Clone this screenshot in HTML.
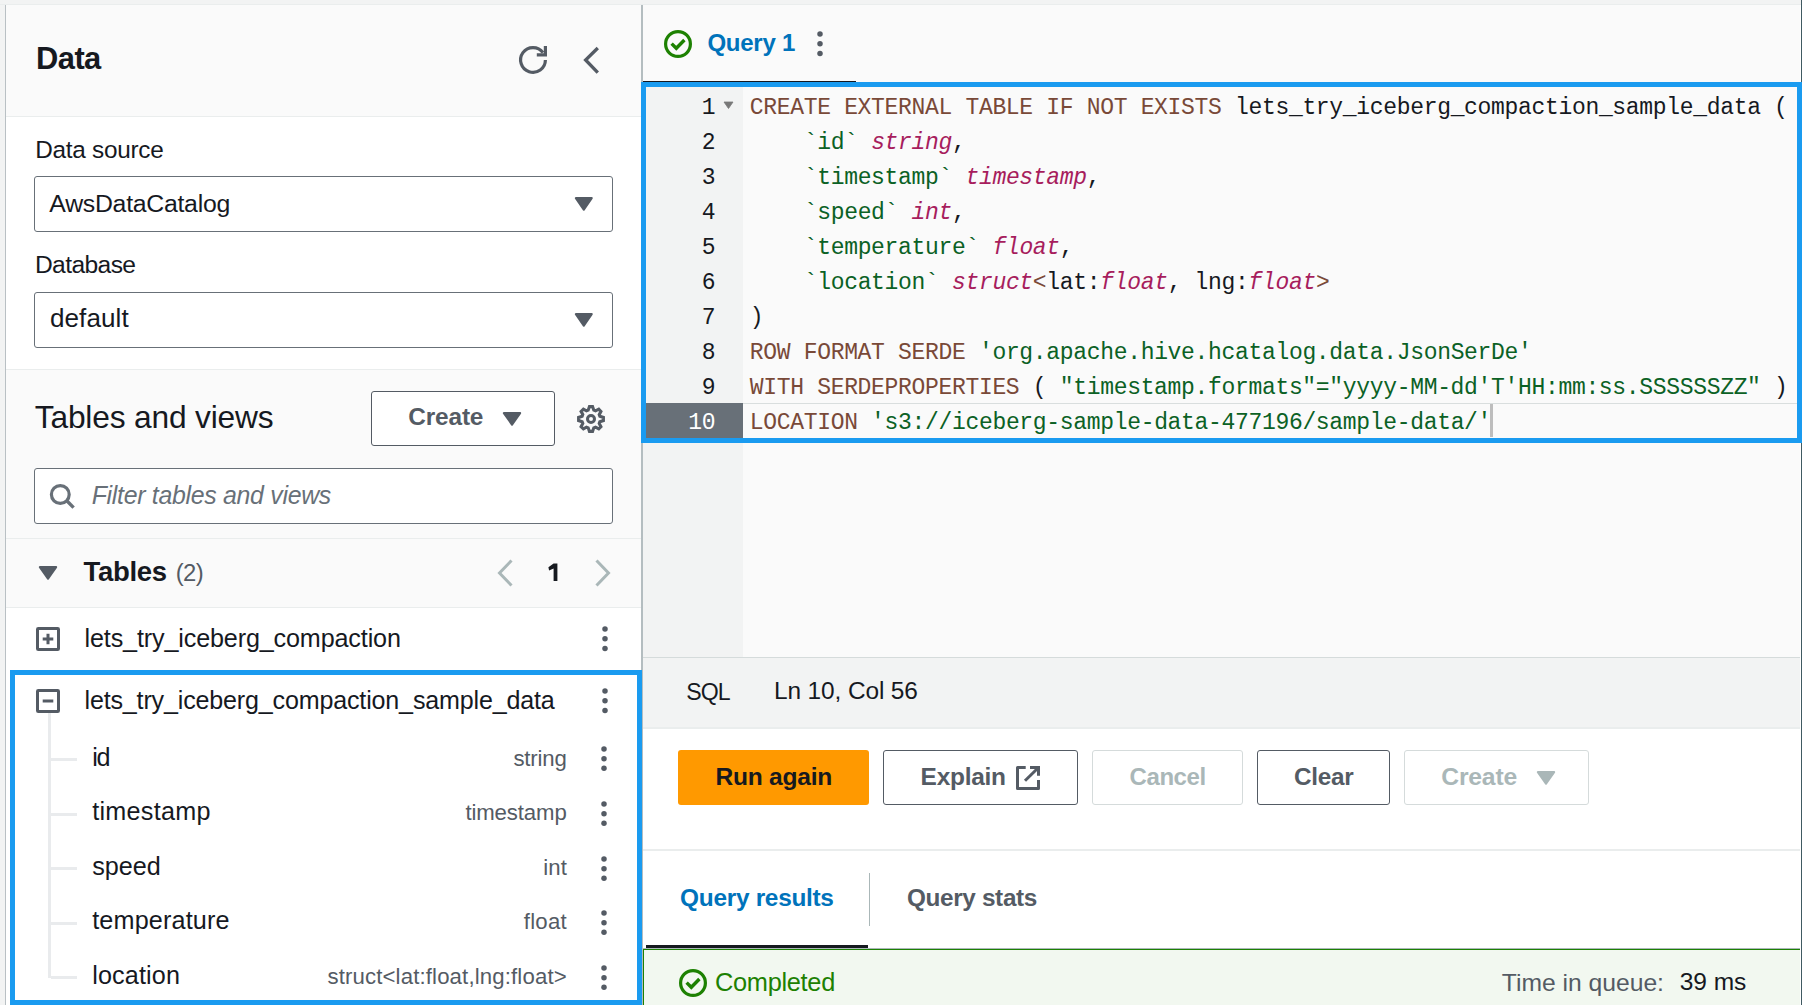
<!DOCTYPE html>
<html><head><meta charset="utf-8"><title>Athena Query Editor</title>
<style>
html,body{margin:0;padding:0;}
body{width:1802px;height:1005px;overflow:hidden;position:relative;background:#f2f3f3;
font-family:"Liberation Sans",sans-serif;}
.a{position:absolute;display:block;}
.t{position:absolute;white-space:pre;}
</style></head><body>
<div class="a" style="left:0px;top:0px;width:1802px;height:1005px;background:#f2f3f3;"></div>
<div class="a" style="left:0px;top:4px;width:1802px;height:1px;background:#eaeded;"></div>
<div class="a" style="left:5px;top:5px;width:637px;height:1000px;background:#ffffff;"></div>
<div class="a" style="left:6px;top:5px;width:635px;height:111px;background:#fafafa;"></div>
<div class="a" style="left:6px;top:116px;width:635px;height:1px;background:#eaeded;"></div>
<div class="a" style="left:6px;top:369px;width:635px;height:1px;background:#eaeded;"></div>
<div class="a" style="left:6px;top:370px;width:635px;height:168px;background:#fafafa;"></div>
<div class="a" style="left:6px;top:538px;width:635px;height:1px;background:#eaeded;"></div>
<div class="a" style="left:6px;top:539px;width:635px;height:68px;background:#fafafa;"></div>
<div class="a" style="left:6px;top:607px;width:635px;height:1px;background:#eaeded;"></div>
<div class="a" style="left:5px;top:5px;width:1px;height:1000px;background:#b9c0c4;"></div>
<div class="t" style="left:36.00px;top:36.80px;font-family:'Liberation Sans',sans-serif;font-size:30.88px;line-height:43px;font-weight:700;color:#16191f;letter-spacing:-0.543px;">Data</div>
<svg class="a" style="left:517px;top:44px;" width="32" height="32" viewBox="0 0 32 32"><path d="M28.4 16 A12.4 12.4 0 1 1 26.0 8.6" fill="none" stroke="#545b64" stroke-width="3.2"/><path d="M19.8 10.8 H28.4 V2" fill="none" stroke="#545b64" stroke-width="3.2"/></svg>
<svg class="a" style="left:580px;top:44px;" width="24" height="32" viewBox="0 0 24 32"><path d="M17.8 4 L5.6 16 L17.8 28.6" fill="none" stroke="#545b64" stroke-width="3.3"/></svg>
<div class="t" style="left:35.30px;top:132.56px;font-family:'Liberation Sans',sans-serif;font-size:24.34px;line-height:34px;font-weight:400;color:#16191f;letter-spacing:-0.275px;">Data source</div>
<div class="a" style="left:34px;top:176px;width:579px;height:56px;background:#fff;border:1px solid #687078;box-sizing:border-box;border-radius:3px;"></div>
<div class="t" style="left:49.30px;top:186.19px;font-family:'Liberation Sans',sans-serif;font-size:24.84px;line-height:35px;font-weight:400;color:#16191f;letter-spacing:-0.273px;">AwsDataCatalog</div>
<svg class="a" style="left:574.4px;top:195.8px;" width="19.600000000000023" height="16.19999999999999" viewBox="0 0 19.600000000000023 16.19999999999999"><path d="M1.9 2.1 L17.7 2.1 L9.8 13.7 Z" fill="#545b64" stroke="#545b64" stroke-width="2.2" stroke-linejoin="round"/></svg>
<div class="t" style="left:34.90px;top:247.56px;font-family:'Liberation Sans',sans-serif;font-size:24.62px;line-height:34px;font-weight:400;color:#16191f;letter-spacing:-0.602px;">Database</div>
<div class="a" style="left:34px;top:292px;width:579px;height:56px;background:#fff;border:1px solid #687078;box-sizing:border-box;border-radius:3px;"></div>
<div class="t" style="left:49.90px;top:299.86px;font-family:'Liberation Sans',sans-serif;font-size:26.07px;line-height:36px;font-weight:400;color:#16191f;letter-spacing:0.091px;">default</div>
<svg class="a" style="left:574.4px;top:311.8px;" width="19.600000000000023" height="16.19999999999999" viewBox="0 0 19.600000000000023 16.19999999999999"><path d="M1.9 2.1 L17.7 2.1 L9.8 13.7 Z" fill="#545b64" stroke="#545b64" stroke-width="2.2" stroke-linejoin="round"/></svg>
<div class="t" style="left:34.80px;top:394.90px;font-family:'Liberation Sans',sans-serif;font-size:31.73px;line-height:44px;font-weight:400;color:#16191f;letter-spacing:-0.187px;">Tables and views</div>
<div class="a" style="left:371px;top:391px;width:184px;height:55px;background:#fff;border:1px solid #545b64;box-sizing:border-box;border-radius:3px;"></div>
<div class="t" style="left:408.20px;top:400.33px;font-family:'Liberation Sans',sans-serif;font-size:24.42px;line-height:34px;font-weight:700;color:#545b64;letter-spacing:-0.145px;">Create</div>
<svg class="a" style="left:502px;top:411px;" width="20" height="16" viewBox="0 0 20 16"><path d="M1.9 2.1 L18.1 2.1 L10.0 13.5 Z" fill="#545b64" stroke="#545b64" stroke-width="2.2" stroke-linejoin="round"/></svg>
<svg class="a" style="left:575px;top:403px;" width="32" height="32" viewBox="0 0 32 32"><path d="M14.45 3.60 L17.55 3.60 L18.79 7.16 L20.50 7.79 L23.75 6.08 L25.92 8.40 L24.22 11.66 L24.84 13.21 L28.40 14.45 L28.40 17.55 L24.84 18.79 L24.22 20.50 L25.92 23.75 L23.75 25.92 L20.50 24.22 L18.79 24.84 L17.55 28.40 L14.45 28.40 L13.21 24.84 L11.50 24.22 L8.40 25.92 L6.08 23.75 L7.79 20.50 L7.16 18.79 L3.60 17.55 L3.60 14.45 L7.16 13.21 L7.79 11.50 L6.08 8.40 L8.40 6.08 L11.50 7.79 L13.21 7.16 Z" fill="none" stroke="#545b64" stroke-width="3.1" stroke-linejoin="miter"/><circle cx="16" cy="16" r="3.5" fill="none" stroke="#545b64" stroke-width="3"/></svg>
<div class="a" style="left:34px;top:468px;width:579px;height:56px;background:#fff;border:1px solid #687078;box-sizing:border-box;border-radius:3px;"></div>
<svg class="a" style="left:46px;top:480px;" width="32" height="32" viewBox="0 0 32 32"><circle cx="14.3" cy="14.5" r="8.9" fill="none" stroke="#687078" stroke-width="3.2"/><path d="M20.8 20.8 L27.6 27.6" stroke="#687078" stroke-width="3.4"/></svg>
<div class="t" style="left:91.70px;top:477.89px;font-family:'Liberation Sans',sans-serif;font-size:24.85px;line-height:35px;font-weight:400;color:#687078;font-style:italic;letter-spacing:-0.283px;">Filter tables and views</div>
<svg class="a" style="left:38px;top:565px;" width="20" height="16" viewBox="0 0 20 16"><path d="M1.9 2.1 L18.1 2.1 L10.0 13.5 Z" fill="#545b64" stroke="#545b64" stroke-width="2.2" stroke-linejoin="round"/></svg>
<div class="t" style="left:83.50px;top:551.65px;font-family:'Liberation Sans',sans-serif;font-size:27.53px;line-height:39px;font-weight:700;color:#16191f;letter-spacing:-0.318px;">Tables</div>
<div class="t" style="left:175.70px;top:555.93px;font-family:'Liberation Sans',sans-serif;font-size:23.85px;line-height:33px;font-weight:400;color:#545b64;letter-spacing:-0.522px;">(2)</div>
<svg class="a" style="left:492px;top:556px;" width="26" height="34" viewBox="0 0 26 34"><path d="M19.5 4.5 L7.5 17 L19.5 29.5" fill="none" stroke="#aab7b8" stroke-width="3"/></svg>
<svg class="a" style="left:545px;top:560px;" width="16" height="24" viewBox="0 0 16 24"><path d="M8.6 3.5 H12.4 V21 H8.6 V8.6 L4.1 10.4 L3.4 7.2 Z" fill="#16191f"/></svg>
<svg class="a" style="left:590px;top:556px;" width="26" height="34" viewBox="0 0 26 34"><path d="M6.5 4.5 L18.5 17 L6.5 29.5" fill="none" stroke="#aab7b8" stroke-width="3"/></svg>
<svg class="a" style="left:34px;top:625px;" width="28" height="28" viewBox="0 0 28 28"><rect x="3.5" y="3.5" width="21" height="21" fill="none" stroke="#545b64" stroke-width="3" rx="0.8"/><path d="M8.7 14 H19.3 M14 8.8 V19.2" stroke="#545b64" stroke-width="3"/></svg>
<div class="t" style="left:84.50px;top:620.77px;font-family:'Liberation Sans',sans-serif;font-size:25.17px;line-height:35px;font-weight:400;color:#16191f;letter-spacing:-0.146px;">lets_try_iceberg_compaction</div>
<svg class="a" style="left:600px;top:624.4px;" width="10" height="29.399999999999977" viewBox="0 0 10 29.399999999999977"><circle cx="5.00" cy="5.00" r="2.75" fill="#545b64"/><circle cx="5.00" cy="14.70" r="2.75" fill="#545b64"/><circle cx="5.00" cy="24.40" r="2.75" fill="#545b64"/></svg>
<svg class="a" style="left:34px;top:687px;" width="28" height="28" viewBox="0 0 28 28"><rect x="3.5" y="3.5" width="21" height="21" fill="none" stroke="#545b64" stroke-width="3" rx="0.8"/><path d="M8.7 14 H19.3" stroke="#545b64" stroke-width="3"/></svg>
<div class="t" style="left:84.50px;top:682.80px;font-family:'Liberation Sans',sans-serif;font-size:25.09px;line-height:35px;font-weight:400;color:#16191f;letter-spacing:-0.171px;">lets_try_iceberg_compaction_sample_data</div>
<svg class="a" style="left:600px;top:686.2px;" width="10" height="29.5" viewBox="0 0 10 29.5"><circle cx="5.00" cy="5.00" r="2.75" fill="#545b64"/><circle cx="5.00" cy="14.80" r="2.75" fill="#545b64"/><circle cx="5.00" cy="24.50" r="2.75" fill="#545b64"/></svg>
<div class="a" style="left:48px;top:713px;width:3px;height:265px;background:#e9ebed;"></div>
<div class="a" style="left:51px;top:758px;width:26px;height:3px;background:#e9ebed;"></div>
<div class="t" style="left:92.20px;top:739.76px;font-family:'Liberation Sans',sans-serif;font-size:25.20px;line-height:35px;font-weight:400;color:#16191f;letter-spacing:-1.306px;">id</div>
<div class="t" style="left:513.40px;top:742.80px;font-family:'Liberation Sans',sans-serif;font-size:22.20px;line-height:31px;font-weight:400;color:#545b64;letter-spacing:-0.176px;">string</div>
<svg class="a" style="left:599px;top:744.4px;" width="10" height="29.300000000000068" viewBox="0 0 10 29.300000000000068"><circle cx="5.00" cy="5.00" r="2.75" fill="#545b64"/><circle cx="5.00" cy="14.70" r="2.75" fill="#545b64"/><circle cx="5.00" cy="24.30" r="2.75" fill="#545b64"/></svg>
<div class="a" style="left:51px;top:813px;width:26px;height:3px;background:#e9ebed;"></div>
<div class="t" style="left:92.20px;top:794.21px;font-family:'Liberation Sans',sans-serif;font-size:25.20px;line-height:35px;font-weight:400;color:#16191f;letter-spacing:0.272px;">timestamp</div>
<div class="t" style="left:465.40px;top:797.25px;font-family:'Liberation Sans',sans-serif;font-size:22.20px;line-height:31px;font-weight:400;color:#545b64;letter-spacing:-0.123px;">timestamp</div>
<svg class="a" style="left:599px;top:799.0px;" width="10" height="29.300000000000068" viewBox="0 0 10 29.300000000000068"><circle cx="5.00" cy="5.00" r="2.75" fill="#545b64"/><circle cx="5.00" cy="14.70" r="2.75" fill="#545b64"/><circle cx="5.00" cy="24.30" r="2.75" fill="#545b64"/></svg>
<div class="a" style="left:51px;top:867px;width:26px;height:3px;background:#e9ebed;"></div>
<div class="t" style="left:92.20px;top:848.66px;font-family:'Liberation Sans',sans-serif;font-size:25.20px;line-height:35px;font-weight:400;color:#16191f;">speed</div>
<div class="t" style="left:543.36px;top:851.70px;font-family:'Liberation Sans',sans-serif;font-size:22.20px;line-height:31px;font-weight:400;color:#545b64;">int</div>
<svg class="a" style="left:599px;top:853.6px;" width="10" height="29.300000000000068" viewBox="0 0 10 29.300000000000068"><circle cx="5.00" cy="5.00" r="2.75" fill="#545b64"/><circle cx="5.00" cy="14.70" r="2.75" fill="#545b64"/><circle cx="5.00" cy="24.30" r="2.75" fill="#545b64"/></svg>
<div class="a" style="left:51px;top:922px;width:26px;height:3px;background:#e9ebed;"></div>
<div class="t" style="left:92.20px;top:903.11px;font-family:'Liberation Sans',sans-serif;font-size:25.20px;line-height:35px;font-weight:400;color:#16191f;letter-spacing:0.152px;">temperature</div>
<div class="t" style="left:523.70px;top:906.15px;font-family:'Liberation Sans',sans-serif;font-size:22.20px;line-height:31px;font-weight:400;color:#545b64;letter-spacing:0.286px;">float</div>
<svg class="a" style="left:599px;top:908.2px;" width="10" height="29.300000000000068" viewBox="0 0 10 29.300000000000068"><circle cx="5.00" cy="5.00" r="2.75" fill="#545b64"/><circle cx="5.00" cy="14.70" r="2.75" fill="#545b64"/><circle cx="5.00" cy="24.30" r="2.75" fill="#545b64"/></svg>
<div class="a" style="left:51px;top:976px;width:26px;height:3px;background:#e9ebed;"></div>
<div class="t" style="left:92.20px;top:957.56px;font-family:'Liberation Sans',sans-serif;font-size:25.20px;line-height:35px;font-weight:400;color:#16191f;letter-spacing:0.134px;">location</div>
<div class="t" style="left:327.40px;top:960.60px;font-family:'Liberation Sans',sans-serif;font-size:22.20px;line-height:31px;font-weight:400;color:#545b64;letter-spacing:0.142px;">struct&lt;lat:float,lng:float&gt;</div>
<svg class="a" style="left:599px;top:962.8px;" width="10" height="29.300000000000068" viewBox="0 0 10 29.300000000000068"><circle cx="5.00" cy="5.00" r="2.75" fill="#545b64"/><circle cx="5.00" cy="14.70" r="2.75" fill="#545b64"/><circle cx="5.00" cy="24.30" r="2.75" fill="#545b64"/></svg>
<div class="a" style="left:642px;top:5px;width:1158px;height:1000px;background:#fafafa;"></div>
<div class="a" style="left:1800px;top:5px;width:1px;height:1000px;background:#ffffff;"></div>
<div class="a" style="left:1801px;top:0px;width:1px;height:1005px;background:#405a62;"></div>
<svg class="a" style="left:662px;top:28px;" width="32" height="32" viewBox="0 0 32 32"><circle cx="16" cy="16" r="12.4" fill="none" stroke="#1d8102" stroke-width="3.2"/><path d="M9.6 15.6 L14.3 20.3 L22.4 12" fill="none" stroke="#1d8102" stroke-width="3.4"/></svg>
<div class="t" style="left:707.40px;top:26.27px;font-family:'Liberation Sans',sans-serif;font-size:24.04px;line-height:34px;font-weight:700;color:#0073bb;letter-spacing:-0.272px;">Query 1</div>
<svg class="a" style="left:815px;top:29.200000000000003px;" width="10" height="29.5" viewBox="0 0 10 29.5"><circle cx="5.00" cy="5.00" r="2.75" fill="#545b64"/><circle cx="5.00" cy="14.70" r="2.75" fill="#545b64"/><circle cx="5.00" cy="24.50" r="2.75" fill="#545b64"/></svg>
<div class="a" style="left:642px;top:81px;width:214px;height:1px;background:#16191f;"></div>
<div class="a" style="left:642px;top:82px;width:101px;height:575px;background:#f2f3f3;"></div>
<div class="a" style="left:743px;top:82px;width:1057px;height:575px;background:#fafafa;"></div>
<div class="a" style="left:642px;top:403px;width:101px;height:35px;background:#687078;"></div>
<div class="a" style="left:743px;top:403px;width:1057px;height:1px;background:#d9dede;"></div>
<div class="t" style="left:701.70px;top:91.58px;font-family:'Liberation Mono',monospace;font-size:23.00px;line-height:32px;font-weight:400;color:#16191f;letter-spacing:-0.325px;">1</div>
<div class="t" style="left:749.8px;top:90.88px;font-family:'Liberation Mono',monospace;font-size:23.0px;line-height:35px;letter-spacing:-0.325px;white-space:pre;"><span style="color:#794938;">CREATE EXTERNAL TABLE IF NOT EXISTS</span><span style="color:#16191f;"> lets_try_iceberg_compaction_sample_data (</span></div>
<div class="t" style="left:701.70px;top:126.58px;font-family:'Liberation Mono',monospace;font-size:23.00px;line-height:32px;font-weight:400;color:#16191f;letter-spacing:-0.325px;">2</div>
<div class="t" style="left:749.8px;top:125.88px;font-family:'Liberation Mono',monospace;font-size:23.0px;line-height:35px;letter-spacing:-0.325px;white-space:pre;"><span style="color:#16191f;">    </span><span style="color:#0b6125;">`id`</span><span style="color:#16191f;"> </span><span style="color:#a71d5d;font-style:italic;">string</span><span style="color:#16191f;">,</span></div>
<div class="t" style="left:701.70px;top:161.58px;font-family:'Liberation Mono',monospace;font-size:23.00px;line-height:32px;font-weight:400;color:#16191f;letter-spacing:-0.325px;">3</div>
<div class="t" style="left:749.8px;top:160.88px;font-family:'Liberation Mono',monospace;font-size:23.0px;line-height:35px;letter-spacing:-0.325px;white-space:pre;"><span style="color:#16191f;">    </span><span style="color:#0b6125;">`timestamp`</span><span style="color:#16191f;"> </span><span style="color:#a71d5d;font-style:italic;">timestamp</span><span style="color:#16191f;">,</span></div>
<div class="t" style="left:701.70px;top:196.58px;font-family:'Liberation Mono',monospace;font-size:23.00px;line-height:32px;font-weight:400;color:#16191f;letter-spacing:-0.325px;">4</div>
<div class="t" style="left:749.8px;top:195.88px;font-family:'Liberation Mono',monospace;font-size:23.0px;line-height:35px;letter-spacing:-0.325px;white-space:pre;"><span style="color:#16191f;">    </span><span style="color:#0b6125;">`speed`</span><span style="color:#16191f;"> </span><span style="color:#a71d5d;font-style:italic;">int</span><span style="color:#16191f;">,</span></div>
<div class="t" style="left:701.70px;top:231.58px;font-family:'Liberation Mono',monospace;font-size:23.00px;line-height:32px;font-weight:400;color:#16191f;letter-spacing:-0.325px;">5</div>
<div class="t" style="left:749.8px;top:230.88px;font-family:'Liberation Mono',monospace;font-size:23.0px;line-height:35px;letter-spacing:-0.325px;white-space:pre;"><span style="color:#16191f;">    </span><span style="color:#0b6125;">`temperature`</span><span style="color:#16191f;"> </span><span style="color:#a71d5d;font-style:italic;">float</span><span style="color:#16191f;">,</span></div>
<div class="t" style="left:701.70px;top:266.58px;font-family:'Liberation Mono',monospace;font-size:23.00px;line-height:32px;font-weight:400;color:#16191f;letter-spacing:-0.325px;">6</div>
<div class="t" style="left:749.8px;top:265.88px;font-family:'Liberation Mono',monospace;font-size:23.0px;line-height:35px;letter-spacing:-0.325px;white-space:pre;"><span style="color:#16191f;">    </span><span style="color:#0b6125;">`location`</span><span style="color:#16191f;"> </span><span style="color:#a71d5d;font-style:italic;">struct</span><span style="color:#794938;">&lt;</span><span style="color:#16191f;">lat:</span><span style="color:#a71d5d;font-style:italic;">float</span><span style="color:#16191f;">, lng:</span><span style="color:#a71d5d;font-style:italic;">float</span><span style="color:#794938;">&gt;</span></div>
<div class="t" style="left:701.70px;top:301.58px;font-family:'Liberation Mono',monospace;font-size:23.00px;line-height:32px;font-weight:400;color:#16191f;letter-spacing:-0.325px;">7</div>
<div class="t" style="left:749.8px;top:300.88px;font-family:'Liberation Mono',monospace;font-size:23.0px;line-height:35px;letter-spacing:-0.325px;white-space:pre;"><span style="color:#16191f;">)</span></div>
<div class="t" style="left:701.70px;top:336.58px;font-family:'Liberation Mono',monospace;font-size:23.00px;line-height:32px;font-weight:400;color:#16191f;letter-spacing:-0.325px;">8</div>
<div class="t" style="left:749.8px;top:335.88px;font-family:'Liberation Mono',monospace;font-size:23.0px;line-height:35px;letter-spacing:-0.325px;white-space:pre;"><span style="color:#794938;">ROW FORMAT SERDE</span><span style="color:#16191f;"> </span><span style="color:#0b6125;">&#x27;org.apache.hive.hcatalog.data.JsonSerDe&#x27;</span></div>
<div class="t" style="left:701.70px;top:371.58px;font-family:'Liberation Mono',monospace;font-size:23.00px;line-height:32px;font-weight:400;color:#16191f;letter-spacing:-0.325px;">9</div>
<div class="t" style="left:749.8px;top:370.88px;font-family:'Liberation Mono',monospace;font-size:23.0px;line-height:35px;letter-spacing:-0.325px;white-space:pre;"><span style="color:#794938;">WITH SERDEPROPERTIES</span><span style="color:#16191f;"> ( </span><span style="color:#0b6125;">&quot;timestamp.formats&quot;=&quot;yyyy-MM-dd&#x27;T&#x27;HH:mm:ss.SSSSSSZZ&quot;</span><span style="color:#16191f;"> )</span></div>
<div class="t" style="left:688.23px;top:406.58px;font-family:'Liberation Mono',monospace;font-size:23.00px;line-height:32px;font-weight:400;color:#ffffff;letter-spacing:-0.325px;">10</div>
<div class="t" style="left:749.8px;top:405.88px;font-family:'Liberation Mono',monospace;font-size:23.0px;line-height:35px;letter-spacing:-0.325px;white-space:pre;"><span style="color:#794938;">LOCATION</span><span style="color:#16191f;"> </span><span style="color:#0b6125;">&#x27;s3://iceberg-sample-data-477196/sample-data/&#x27;</span></div>
<svg class="a" style="left:722px;top:100px;" width="13" height="10" viewBox="0 0 13 10"><path d="M2 2 L11 2 L6.5 8.5 Z" fill="#787878" stroke="#787878" stroke-width="0.8" stroke-linejoin="round"/></svg>
<div class="a" style="left:1490px;top:404px;width:3px;height:33px;background:#bdbdbd;"></div>
<div class="a" style="left:642px;top:657px;width:1158px;height:1px;background:#d5dbdb;"></div>
<div class="a" style="left:642px;top:658px;width:1158px;height:69px;background:#f2f3f3;"></div>
<div class="a" style="left:642px;top:727px;width:1158px;height:2px;background:#eaeded;"></div>
<div class="t" style="left:686.30px;top:675.58px;font-family:'Liberation Sans',sans-serif;font-size:23.12px;line-height:32px;font-weight:400;color:#16191f;letter-spacing:-0.934px;">SQL</div>
<div class="t" style="left:774.00px;top:674.13px;font-family:'Liberation Sans',sans-serif;font-size:24.43px;line-height:34px;font-weight:400;color:#16191f;letter-spacing:-0.113px;">Ln 10, Col 56</div>
<div class="a" style="left:642px;top:729px;width:1158px;height:120px;background:#ffffff;"></div>
<div class="a" style="left:678px;top:750px;width:191px;height:55px;background:#ff9900;border-radius:3px;"></div>
<div class="t" style="left:715.40px;top:759.58px;font-family:'Liberation Sans',sans-serif;font-size:24.57px;line-height:34px;font-weight:700;color:#16191f;letter-spacing:-0.234px;">Run again</div>
<div class="a" style="left:883px;top:750px;width:195px;height:55px;background:#fff;border:1px solid #545b64;box-sizing:border-box;border-radius:3px;"></div>
<div class="t" style="left:920.60px;top:759.62px;font-family:'Liberation Sans',sans-serif;font-size:24.46px;line-height:34px;font-weight:700;color:#545b64;letter-spacing:-0.266px;">Explain</div>
<svg class="a" style="left:1014px;top:763px;" width="29" height="29" viewBox="0 0 29 29"><path d="M11.7 4.5 H3.5 V25.5 H24.5 V17" fill="none" stroke="#545b64" stroke-width="3" stroke-linejoin="round"/><path d="M16 4.5 H24.5 V12.7" fill="none" stroke="#545b64" stroke-width="3"/><path d="M24 5 L11 17.8" fill="none" stroke="#545b64" stroke-width="3"/></svg>
<div class="a" style="left:1092px;top:750px;width:151px;height:55px;background:#fff;border:1px solid #d5dbdb;box-sizing:border-box;border-radius:3px;"></div>
<div class="t" style="left:1129.60px;top:759.77px;font-family:'Liberation Sans',sans-serif;font-size:24.02px;line-height:34px;font-weight:700;color:#aab7b8;letter-spacing:-0.450px;">Cancel</div>
<div class="a" style="left:1257px;top:750px;width:133px;height:55px;background:#fff;border:1px solid #545b64;box-sizing:border-box;border-radius:3px;"></div>
<div class="t" style="left:1294.10px;top:759.67px;font-family:'Liberation Sans',sans-serif;font-size:24.32px;line-height:34px;font-weight:700;color:#545b64;letter-spacing:-0.328px;">Clear</div>
<div class="a" style="left:1404px;top:750px;width:185px;height:55px;background:#fff;border:1px solid #d5dbdb;box-sizing:border-box;border-radius:3px;"></div>
<div class="t" style="left:1441.30px;top:759.04px;font-family:'Liberation Sans',sans-serif;font-size:24.70px;line-height:35px;font-weight:700;color:#aab7b8;letter-spacing:-0.198px;">Create</div>
<svg class="a" style="left:1536px;top:770px;" width="20" height="16" viewBox="0 0 20 16"><path d="M1.9 2.1 L18.1 2.1 L10.0 13.5 Z" fill="#aab7b8" stroke="#aab7b8" stroke-width="2.2" stroke-linejoin="round"/></svg>
<div class="a" style="left:642px;top:849px;width:1158px;height:2px;background:#eaeded;"></div>
<div class="a" style="left:642px;top:851px;width:1158px;height:98px;background:#ffffff;"></div>
<div class="t" style="left:680.10px;top:881.43px;font-family:'Liberation Sans',sans-serif;font-size:24.42px;line-height:34px;font-weight:700;color:#0073bb;letter-spacing:-0.294px;">Query results</div>
<div class="a" style="left:869px;top:873px;width:1px;height:53px;background:#aab7b8;"></div>
<div class="t" style="left:906.90px;top:881.47px;font-family:'Liberation Sans',sans-serif;font-size:24.32px;line-height:34px;font-weight:700;color:#545b64;letter-spacing:-0.331px;">Query stats</div>
<div class="a" style="left:642px;top:948px;width:1158px;height:1px;background:#aab7b8;"></div>
<div class="a" style="left:646px;top:945px;width:222px;height:3px;background:#16191f;"></div>
<div class="a" style="left:643px;top:949px;width:1157px;height:56px;background:#f2f8f0;border:1px solid #1d8102;box-sizing:border-box;border-bottom:none;border-right:none;"></div>
<svg class="a" style="left:677px;top:967px;" width="32" height="32" viewBox="0 0 32 32"><circle cx="16" cy="16" r="12.4" fill="none" stroke="#1d8102" stroke-width="3.2"/><path d="M9.6 15.6 L14.3 20.3 L22.4 12" fill="none" stroke="#1d8102" stroke-width="3.4"/></svg>
<div class="t" style="left:715.00px;top:964.00px;font-family:'Liberation Sans',sans-serif;font-size:25.38px;line-height:36px;font-weight:400;color:#1d8102;letter-spacing:-0.303px;">Completed</div>
<div class="t" style="left:1501.80px;top:964.75px;font-family:'Liberation Sans',sans-serif;font-size:24.68px;line-height:35px;font-weight:400;color:#545b64;letter-spacing:-0.009px;">Time in queue:</div>
<div class="t" style="left:1679.80px;top:965.30px;font-family:'Liberation Sans',sans-serif;font-size:24.52px;line-height:34px;font-weight:400;color:#16191f;letter-spacing:-0.069px;">39 ms</div>
<div class="a" style="left:641px;top:5px;width:2px;height:1000px;background:#b4bdc0;"></div>
<div class="a" style="left:10px;top:670px;width:632px;height:335px;border:5px solid #1a9bf0;box-sizing:border-box;"></div>
<div class="a" style="left:641px;top:82px;width:1161px;height:361px;border:5px solid #1a9bf0;box-sizing:border-box;"></div>
</body></html>
